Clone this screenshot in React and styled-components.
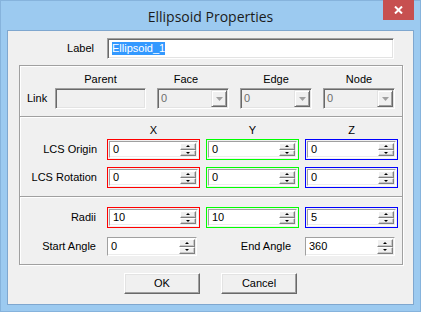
import React from "react";
import styled, { createGlobalStyle } from "styled-components";

const GlobalStyle = createGlobalStyle`
  html, body {
    margin: 0;
    padding: 0;
    background: #9ccaf0;
  }
  body {
    font-family: "Liberation Sans", Arial, sans-serif;
  }
`;

const Frame = styled.div`
  width: 421px;
  height: 312px;
  box-sizing: border-box;
  background: #9ccaf0;
  border: 1px solid #86b3dc;
  padding: 0 6px 6px;
  display: flex;
  flex-direction: column;
`;

const TitleBar = styled.div`
  height: 29px;
  display: grid;
  grid-template-columns: 1fr auto 1fr;
  align-items: center;
`;

const Title = styled.div`
  grid-column: 2;
  font-family: "Open Sans", "Noto Sans", sans-serif;
  font-size: 14px;
  color: #1b1b1b;
  line-height: 29px;
  padding-top: 1px;
`;

const CloseButton = styled.div`
  grid-column: 3;
  justify-self: end;
  align-self: start;
  margin-top: -1px;
  width: 31px;
  height: 20px;
  background: #c75050;
  display: flex;
  align-items: center;
  justify-content: center;
`;

const Client = styled.div`
  flex: 1;
  background: #f0f0f0;
  border: 1px solid #7fa7cf;
  display: flex;
  flex-direction: column;
  padding-top: 7px;
  font-size: 11px;
  color: #000;
`;

const LabelRow = styled.div`
  display: grid;
  grid-template-columns: 86px 287px;
  column-gap: 13px;
  align-items: center;
  height: 21px;
`;

const FieldLabel = styled.div`
  text-align: ${(p) => p.$align || "right"};
  padding-right: ${(p) => p.$pad || 0}px;
  white-space: nowrap;
  line-height: 13px;
`;

const Sunken = styled.div`
  box-sizing: border-box;
  height: ${(p) => p.$h || 21}px;
  background: ${(p) => (p.$disabled ? "#f0f0f0" : "#fff")};
  border-top: 1px solid #a0a0a0;
  border-left: 1px solid #a0a0a0;
  border-bottom: 1px solid #fff;
  border-right: 1px solid #fff;
  box-shadow: inset 1px 1px 0 #696969, inset -1px -1px 0 #e3e3e3;
  padding: 1px;
  display: flex;
  align-items: stretch;
`;

const Value = styled.div`
  flex: 1;
  display: flex;
  align-items: center;
  padding-left: ${(p) => p.$pad || 2}px;
  color: ${(p) => (p.$disabled ? "#6d6d6d" : "#000")};
  line-height: 13px;
`;

const Selected = styled.span`
  background: #3399ff;
  color: #fff;
  line-height: 13px;
`;

const Group = styled.div`
  margin: 6px 10px 0 11px;
  border: 1px solid #a0a0a0;
  box-shadow: 1px 1px 0 #fff, inset 1px 1px 0 #fff;
  display: flex;
  flex-direction: column;
`;

const Section = styled.div`
  display: flex;
  flex-direction: column;
  padding: ${(p) => p.$top}px 0 ${(p) => p.$bottom}px;
  gap: ${(p) => p.$gap || 0}px;
  ${(p) =>
    p.$divided &&
    `border-top: 1px solid #a0a0a0; box-shadow: inset 0 1px 0 #fff;`}
`;

const LinkGrid = styled.div`
  display: grid;
  grid-template-columns: 17px 91px 72px 72px 72px;
  column-gap: 11px;
  row-gap: 2px;
  padding-left: 7px;
  align-items: center;
`;

const CoordGrid = styled.div`
  display: grid;
  grid-template-columns: 81px 93px 93px 93px;
  column-gap: 6px;
  align-items: center;
  margin-top: ${(p) => p.$space || 0}px;
`;

const AngleGrid = styled.div`
  display: grid;
  grid-template-columns: 81px 90px 1fr 90px;
  column-gap: 6px;
  padding-right: 7px;
  align-items: center;
`;

const Header = styled.div`
  text-align: center;
  line-height: 13px;
  height: 13px;
  transform: translateX(${(p) => p.$shift || 0}px);
`;

const Outline = styled.div`
  box-sizing: border-box;
  height: 21px;
  border: 1px solid ${(p) => p.$color};
  padding: 1px;
  background: #f0f0f0;
`;

const SpinField = styled.div`
  box-sizing: border-box;
  height: ${(p) => p.$h}px;
  background: #fff;
  border-top: 1px solid #a0a0a0;
  border-left: 1px solid #a0a0a0;
  border-bottom: 1px solid #fff;
  border-right: 1px solid #fff;
  box-shadow: inset -1px -1px 0 #ececec;
  padding: 1px 1px 1px 0;
  display: flex;
  align-items: stretch;
`;

const SpinButtons = styled.div`
  width: 16px;
  display: flex;
  flex-direction: column;
`;

const SpinHalf = styled.div`
  flex: 1;
  box-sizing: border-box;
  background: #f0f0f0;
  border-top: 1px solid #fff;
  border-left: 1px solid #fff;
  border-bottom: 1px solid #808080;
  border-right: 1px solid #808080;
  box-shadow: inset -1px -1px 0 #c8c8c8;
  display: flex;
  align-items: center;
  justify-content: center;
`;

const DropButton = styled.div`
  width: 16px;
  box-sizing: border-box;
  background: #f0f0f0;
  border-top: 1px solid #e3e3e3;
  border-left: 1px solid #e3e3e3;
  border-bottom: 1px solid #696969;
  border-right: 1px solid #696969;
  box-shadow: inset 1px 1px 0 #fff, inset -1px -1px 0 #a0a0a0;
  display: flex;
  align-items: center;
  justify-content: center;
`;

const ButtonRow = styled.div`
  display: flex;
  justify-content: center;
  gap: 21px;
  margin-top: 8px;
`;

const Button = styled.div`
  box-sizing: border-box;
  width: 76px;
  height: 21px;
  background: #f0f0f0;
  border-top: 1px solid #fff;
  border-left: 1px solid #fff;
  border-bottom: 1px solid #696969;
  border-right: 1px solid #696969;
  box-shadow: inset -1px -1px 0 #a0a0a0, inset 1px 1px 0 #e3e3e3;
  display: flex;
  align-items: center;
  justify-content: center;
  line-height: 13px;
`;

function Arrow({ up, color = "#000", w = 5, h = 3 }) {
  const pts = up ? `0,${h} ${w},${h} ${w / 2},0` : `0,0 ${w},0 ${w / 2},${h}`;
  return (
    <svg width={w} height={h} viewBox={`0 0 ${w} ${h}`}>
      <polygon points={pts} fill={color} />
    </svg>
  );
}

function Spin({ value, color, h }) {
  const field = (
    <SpinField $h={color ? 17 : h || 19}>
      <Value $pad={3}>{value}</Value>
      <SpinButtons>
        <SpinHalf>
          <Arrow up w={4} h={2} />
        </SpinHalf>
        <SpinHalf>
          <Arrow w={4} h={2} />
        </SpinHalf>
      </SpinButtons>
    </SpinField>
  );
  return color ? <Outline $color={color}>{field}</Outline> : field;
}

function Combo({ value }) {
  return (
    <Sunken $disabled $h={21}>
      <Value $disabled>{value}</Value>
      <DropButton>
        <Arrow w={7} h={4} color="#a0a0a0" />
      </DropButton>
    </Sunken>
  );
}

const RED = "#ff0000";
const GREEN = "#00ff00";
const BLUE = "#0000ff";

export default function App() {
  return (
    <>
      <GlobalStyle />
      <Frame>
        <TitleBar>
          <Title>Ellipsoid Properties</Title>
          <CloseButton>
            <svg width="9" height="8" viewBox="0 0 9 8">
              <path d="M1 0.5 L8 7.5 M8 0.5 L1 7.5" stroke="#fff" strokeWidth="2" />
            </svg>
          </CloseButton>
        </TitleBar>
        <Client>
          <LabelRow>
            <FieldLabel>Label</FieldLabel>
            <Sunken $h={21}>
              <Value $pad={3}>
                <Selected>Ellipsoid_1</Selected>
              </Value>
            </Sunken>
          </LabelRow>

          <Group>
            <Section $top={7} $bottom={7}>
              <LinkGrid>
                <div />
                <Header>Parent</Header>
                <Header $shift={-7}>Face</Header>
                <Header>Edge</Header>
                <Header>Node</Header>
                <FieldLabel $align="left">Link</FieldLabel>
                <Sunken $disabled $h={21} />
                <Combo value="0" />
                <Combo value="0" />
                <Combo value="0" />
              </LinkGrid>
            </Section>

            <Section $divided $top={7} $bottom={8} $gap={2}>
              <CoordGrid>
                <div />
                <Header>X</Header>
                <Header>Y</Header>
                <Header>Z</Header>
              </CoordGrid>
              <CoordGrid>
                <FieldLabel $pad={4}>LCS Origin</FieldLabel>
                <Spin value="0" color={RED} />
                <Spin value="0" color={GREEN} />
                <Spin value="0" color={BLUE} />
              </CoordGrid>
              <CoordGrid $space={5}>
                <FieldLabel $pad={4}>LCS Rotation</FieldLabel>
                <Spin value="0" color={RED} />
                <Spin value="0" color={GREEN} />
                <Spin value="0" color={BLUE} />
              </CoordGrid>
            </Section>

            <Section $divided $top={10} $bottom={8} $gap={9}>
              <CoordGrid>
                <FieldLabel $pad={5}>Radii</FieldLabel>
                <Spin value="10" color={RED} />
                <Spin value="10" color={GREEN} />
                <Spin value="5" color={BLUE} />
              </CoordGrid>
              <AngleGrid>
                <FieldLabel $pad={5}>Start Angle</FieldLabel>
                <Spin value="0" h={19} />
                <FieldLabel $pad={8}>End Angle</FieldLabel>
                <Spin value="360" h={19} />
              </AngleGrid>
            </Section>
          </Group>

          <ButtonRow>
            <Button>OK</Button>
            <Button>Cancel</Button>
          </ButtonRow>
        </Client>
      </Frame>
    </>
  );
}
